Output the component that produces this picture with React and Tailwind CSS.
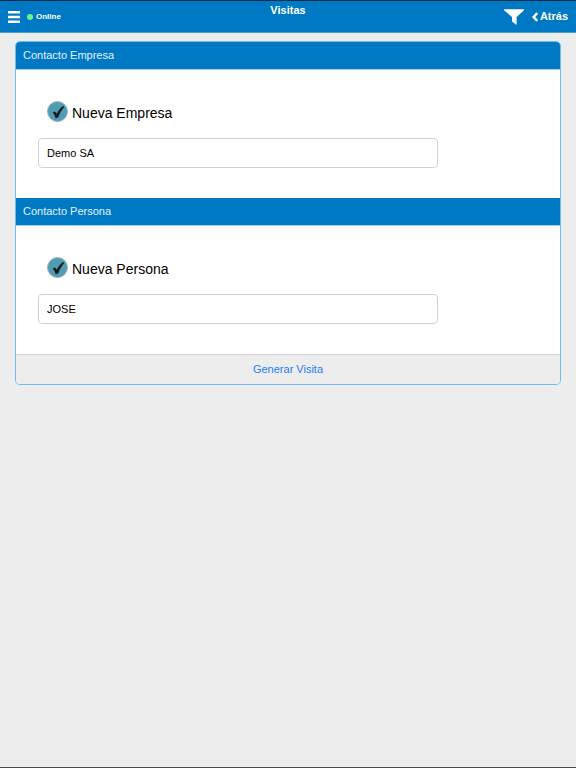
import { useState } from 'react'

const SECTIONS = [
  { id: 'empresa', title: 'Contacto Empresa', check: 'Nueva Empresa', value: 'Demo SA' },
  { id: 'persona', title: 'Contacto Persona', check: 'Nueva Persona', value: 'JOSE' },
]

function Header() {
  return (
    <header className="grid h-[33px] grid-cols-3 border-t border-t-[#062c48] border-b border-b-[#4ba0d8] bg-[#0079c4] text-white">
      {/* Menu + connection state */}
      <div className="flex items-center gap-[7px] pl-2">
        <button type="button" aria-label="Menú">
          <svg viewBox="0 0 12 12" className="h-3 w-3" fill="currentColor">
            <path d="M0 0h12v2.400H0zM0 4.800h12v2.400H0zM0 9.600h12V12H0z" />
          </svg>
        </button>
        <span className="flex items-center gap-[3px] text-[8px] font-bold">
          <span className="h-[6px] w-[6px] rounded-full bg-[#6df58c]" />
          Online
        </span>
      </div>

      <h1 className="pt-[2px] text-center text-[11px] leading-[14px] font-bold">Visitas</h1>

      {/* Filter + back */}
      <div className="flex items-center justify-end gap-2 pr-2">
        <button type="button" aria-label="Filtrar">
          <svg viewBox="0 0 20 16" className="h-4 w-5" fill="currentColor">
            <path d="M0 .3h20v1L12.600 8v8L8 12.600V8L0 1.300z" />
          </svg>
        </button>
        <a href="#" className="flex items-center gap-[2px] text-[11px] font-bold">
          <svg viewBox="0 0 6 10" className="h-[10px] w-[6px]" fill="none" stroke="currentColor" strokeWidth="2.400">
            <path d="M5.200 1L1.600 5l3.600 4" />
          </svg>
          Atrás
        </a>
      </div>
    </header>
  )
}

function Section({ id, title, check, value }) {
  const [checked, setChecked] = useState(true)
  const [text, setText] = useState(value)

  return (
    <section>
      <h2 className="h-[27px] bg-[#0079c4] px-[7px] text-[11px] leading-[27px] text-[#e3f2fc]">{title}</h2>
      <div className="border-t border-[#9fd0ef] px-[22px] pt-[31px] pb-[30px]">
        <label className="flex items-start gap-1 pl-[9px] text-[14px] leading-6">
          <span className="grid h-[21px] w-[21px]">
            <input
              type="checkbox"
              checked={checked}
              onChange={(e) => setChecked(e.target.checked)}
              className="col-start-1 row-start-1 h-[21px] w-[21px] appearance-none rounded-full border border-[#a3b3b8] bg-white checked:bg-[#4f9db3]"
            />
            {checked && (
              <svg viewBox="0 0 21 21" className="pointer-events-none col-start-1 row-start-1 h-[21px] w-[21px]">
                <path
                  d="M6 11.600C7.400 10.300 8.800 10.800 9.700 13.300C11.300 10 13.200 7.400 16 5.200L17 6C14.300 9 12.500 12.200 11 16.200L8.800 17C8.100 14.800 7.500 13.200 6 11.600Z"
                  fill="#14191b"
                  stroke="#14191b"
                  strokeWidth="0.500"
                />
              </svg>
            )}
          </span>
          <span>{check}</span>
        </label>
        <input
          id={id}
          type="text"
          aria-label={check}
          value={text}
          onChange={(e) => setText(e.target.value)}
          className="mt-[13px] block h-[30px] w-4/5 rounded-[4px] border border-[#d2d2d2] bg-white px-2 text-[11px] text-black"
        />
      </div>
    </section>
  )
}

export default function App() {
  return (
    <div className="min-h-screen border-b border-[#4a4a4a] bg-[#ededed] font-['Liberation_Sans',Arial,sans-serif] text-black">
      <Header />
      <main className="px-[15px] pt-2">
        <form
          onSubmit={(e) => e.preventDefault()}
          className="overflow-hidden rounded-[5px] border border-[#6fbdf0] bg-white"
        >
          {SECTIONS.map((s) => (
            <Section key={s.id} {...s} />
          ))}
          <button
            type="submit"
            className="block h-[30px] w-full border-t border-[#d4d4d4] bg-[#ededed] text-center text-[11px] text-[#1f7df5]"
          >
            Generar Visita
          </button>
        </form>
      </main>
    </div>
  )
}
